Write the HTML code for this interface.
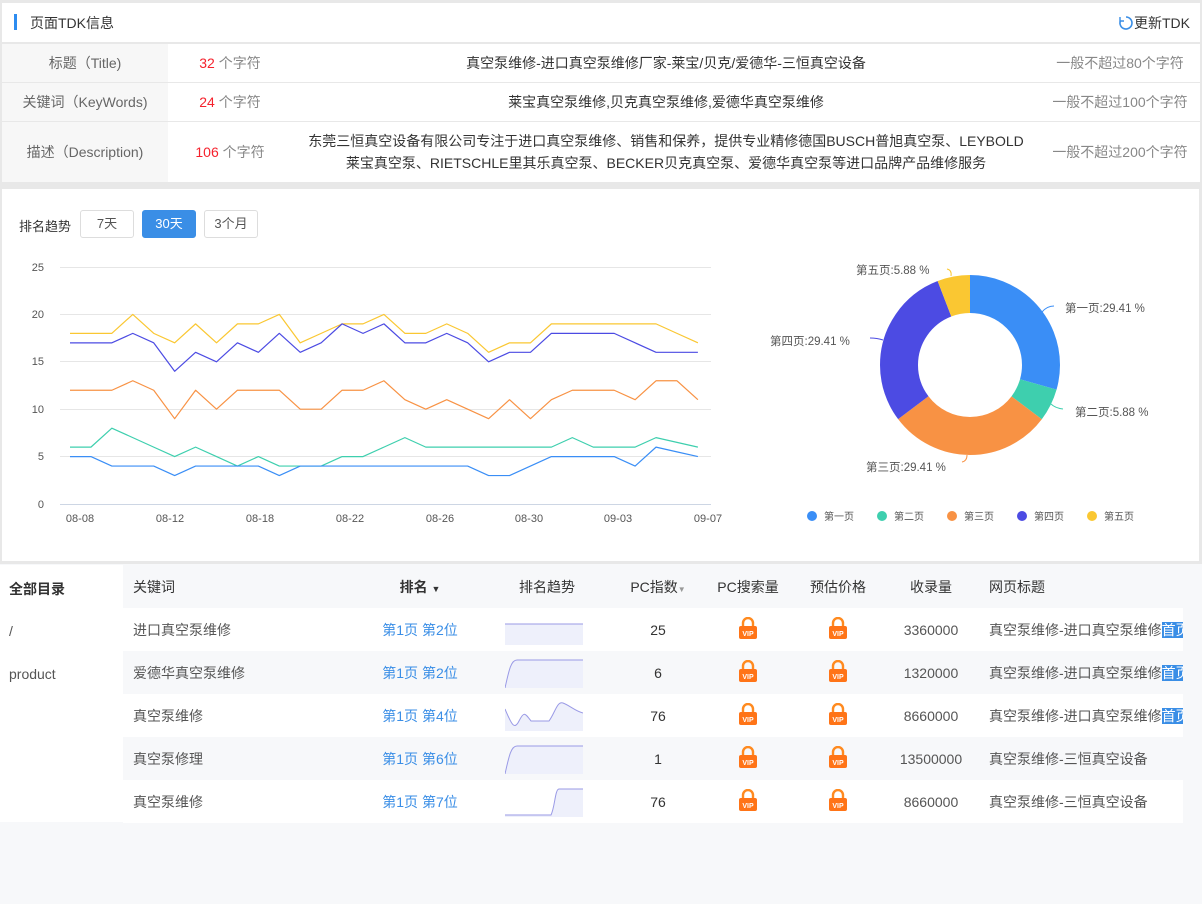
<!DOCTYPE html>
<html><head><meta charset="utf-8"><style>
*{margin:0;padding:0;box-sizing:border-box}
body{width:1202px;height:904px;background:#f7f8fa;font-family:"Liberation Sans","Noto Sans CJK SC",sans-serif;font-size:13px;color:#333;position:relative;overflow:hidden}
.abs{position:absolute}
.tdk{left:0;top:0;width:1202px;height:186px;background:#e8e8e8}
.hd{left:2px;top:3px;width:1198px;height:39px;background:#fff}
.row{left:2px;width:1198px;background:#fff;display:flex;align-items:center}
.row .l{width:166px;height:100%;background:#f7f7f7;display:flex;align-items:center;justify-content:center;color:#666;font-size:14px}
.row .c{width:124px;text-align:center;color:#888;font-size:14px}
.row .c b{color:#f5222d;font-weight:normal}
.row .m{flex:1;text-align:center;font-size:14px;line-height:22px;color:#333;white-space:nowrap}
.row .r{width:160px;text-align:center;color:#888;font-size:14px}
.card{left:0;top:186px;width:1202px;height:378px;background:#e8e8e8}
.cardin{left:2px;top:189px;width:1197px;height:372px;background:#fff}
.btn{top:210px;height:28px;border:1px solid #ddd;border-radius:3px;background:#fff;font-size:13px;color:#555;text-align:center;line-height:26px}
.side{left:0;top:565px;width:123px;height:257px;background:#fff}
.tr{height:43px;display:flex;align-items:center;font-size:14px;color:#555}
.tr>div{flex:none}
.lk{color:#3a8ee6}
.kw{width:10px}.k{width:202px}.rk{width:170px;text-align:center}.tc{width:108px;display:flex}.pi{width:90px;text-align:center;color:#333}.vp{width:90px;text-align:center}.sl{width:96px;text-align:center}.tt{width:204px;padding-left:10px;white-space:nowrap;overflow:hidden}
</style></head><body>
<div class="abs tdk"></div>
<div class="abs hd"><div class="abs" style="left:12px;top:11px;width:3px;height:16px;background:#2d8cf0"></div><div class="abs" style="left:28px;top:10px;font-size:14px;color:#333">页面TDK信息</div>
<div class="abs" style="right:10px;top:10px;font-size:14px;color:#333;display:flex;align-items:center"><svg width="16" height="16" viewBox="0 0 16 16"><path d="M8 2a6 6 0 1 1-5.6 3.8" fill="none" stroke="#3a8ee6" stroke-width="1.6"/><path d="M2 2v4h4" fill="none" stroke="#3a8ee6" stroke-width="1.4"/></svg>更新TDK</div></div>
<div class="abs row" style="top:44px;height:38px"><div class="l">标题（Title)</div><div class="c"><b>32</b> 个字符</div><div class="m">真空泵维修-进口真空泵维修厂家-莱宝/贝克/爱德华-三恒真空设备</div><div class="r">一般不超过80个字符</div></div>
<div class="abs row" style="top:83px;height:38px"><div class="l">关键词（KeyWords)</div><div class="c"><b>24</b> 个字符</div><div class="m">莱宝真空泵维修,贝克真空泵维修,爱德华真空泵维修</div><div class="r">一般不超过100个字符</div></div>
<div class="abs row" style="top:122px;height:60px"><div class="l">描述（Description)</div><div class="c"><b>106</b> 个字符</div><div class="m">东莞三恒真空设备有限公司专注于进口真空泵维修、销售和保养，提供专业精修德国BUSCH普旭真空泵、LEYBOLD<br>莱宝真空泵、RIETSCHLE里其乐真空泵、BECKER贝克真空泵、爱德华真空泵等进口品牌产品维修服务</div><div class="r">一般不超过200个字符</div></div>

<div class="abs card"></div><div class="abs cardin"></div>
<div class="abs" style="left:19px;top:216px;font-size:13px;color:#333">排名趋势</div>
<div class="abs btn" style="left:80px;width:54px">7天</div>
<div class="abs btn" style="left:142px;width:54px;background:#3a8ee6;border-color:#3a8ee6;color:#fff">30天</div>
<div class="abs btn" style="left:204px;width:54px">3个月</div>

<svg class="abs" style="left:0;top:0" width="1202" height="904">
<g stroke="#e6e6e6" stroke-width="1"><line x1="60" y1="267.5" x2="711" y2="267.5"/><line x1="60" y1="314.5" x2="711" y2="314.5"/><line x1="60" y1="361.5" x2="711" y2="361.5"/><line x1="60" y1="409.5" x2="711" y2="409.5"/><line x1="60" y1="456.5" x2="711" y2="456.5"/></g>
<line x1="60" y1="504.5" x2="711" y2="504.5" stroke="#cdd6e4"/>
<g font-size="11" fill="#555" font-family="Liberation Sans,sans-serif" text-anchor="end"><text x="44" y="271">25</text><text x="44" y="318">20</text><text x="44" y="365">15</text><text x="44" y="413">10</text><text x="44" y="460">5</text><text x="44" y="508">0</text></g>
<g font-size="11" fill="#555" font-family="Liberation Sans,sans-serif" text-anchor="middle"><text x="80" y="522">08-08</text><text x="170" y="522">08-12</text><text x="260" y="522">08-18</text><text x="350" y="522">08-22</text><text x="440" y="522">08-26</text><text x="529" y="522">08-30</text><text x="618" y="522">09-03</text><text x="708" y="522">09-07</text></g>
<g transform="translate(70,504) scale(20.93,-9.48)" fill="none" stroke-linejoin="round">
<polyline vector-effect="non-scaling-stroke" stroke="#fac732" stroke-width="1.2" points="0,18 1,18 2,18 3,20 4,18 5,17 6,19 7,17 8,19 9,19 10,20 11,17 12,18 13,19 14,19 15,20 16,18 17,18 18,19 19,18 20,16 21,17 22,17 23,19 24,19 25,19 26,19 27,19 28,19 29,18 30,17"/>
<polyline vector-effect="non-scaling-stroke" stroke="#4c4be3" stroke-width="1.2" points="0,17 1,17 2,17 3,18 4,17 5,14 6,16 7,15 8,17 9,16 10,18 11,16 12,17 13,19 14,18 15,19 16,17 17,17 18,18 19,17 20,15 21,16 22,16 23,18 24,18 25,18 26,18 27,17 28,16 29,16 30,16"/>
<polyline vector-effect="non-scaling-stroke" stroke="#f89244" stroke-width="1.2" points="0,12 1,12 2,12 3,13 4,12 5,9 6,12 7,10 8,12 9,12 10,12 11,10 12,10 13,12 14,12 15,13 16,11 17,10 18,11 19,10 20,9 21,11 22,9 23,11 24,12 25,12 26,12 27,11 28,13 29,13 30,11"/>
<polyline vector-effect="non-scaling-stroke" stroke="#3ecfae" stroke-width="1.2" points="0,6 1,6 2,8 3,7 4,6 5,5 6,6 7,5 8,4 9,5 10,4 11,4 12,4 13,5 14,5 15,6 16,7 17,6 18,6 19,6 20,6 21,6 22,6 23,6 24,7 25,6 26,6 27,6 28,7 29,6.5 30,6"/>
<polyline vector-effect="non-scaling-stroke" stroke="#3a8ef6" stroke-width="1.2" points="0,5 1,5 2,4 3,4 4,4 5,3 6,4 7,4 8,4 9,4 10,3 11,4 12,4 13,4 14,4 15,4 16,4 17,4 18,4 19,4 20,3 21,3 22,4 23,5 24,5 25,5 26,5 27,4 28,6 29,5.5 30,5"/>
</g>
<g transform="rotate(-90 970 365)" fill="none" stroke-width="38">
<circle cx="970" cy="365" r="71" stroke="#3a8ef6" stroke-dasharray="131.2 446.1" stroke-dashoffset="0"/>
<circle cx="970" cy="365" r="71" stroke="#3ecfae" stroke-dasharray="26.2 446.1" stroke-dashoffset="-131.2"/>
<circle cx="970" cy="365" r="71" stroke="#f89244" stroke-dasharray="131.2 446.1" stroke-dashoffset="-157.4"/>
<circle cx="970" cy="365" r="71" stroke="#4c4be3" stroke-dasharray="131.2 446.1" stroke-dashoffset="-288.6"/>
<circle cx="970" cy="365" r="71" stroke="#fac732" stroke-dasharray="26.3 446.1" stroke-dashoffset="-419.8"/>
</g>
<g fill="none" stroke-width="1"><path d="M1042 312 q5-6 12-6" stroke="#3a8ef6"/><path d="M1051 404 q4 4 12 5" stroke="#3ecfae"/><path d="M967 455 q0 6-5 7" stroke="#f89244"/><path d="M883 340 q-6-2-13-2" stroke="#4c4be3"/><path d="M951 276 q1-6-4-7" stroke="#fac732"/></g>
<g font-size="11.5" fill="#555" font-family="Liberation Sans,'Noto Sans CJK SC',sans-serif"><text x="1065" y="312">第一页:29.41 %</text><text x="1075" y="416">第二页:5.88 %</text><text x="866" y="471">第三页:29.41 %</text><text x="770" y="345">第四页:29.41 %</text><text x="856" y="274">第五页:5.88 %</text></g>
<g font-size="10" fill="#555" font-family="Liberation Sans,'Noto Sans CJK SC',sans-serif"><circle cx="812" cy="516" r="5" fill="#3a8ef6"/><text x="824" y="520">第一页</text><circle cx="882" cy="516" r="5" fill="#3ecfae"/><text x="894" y="520">第二页</text><circle cx="952" cy="516" r="5" fill="#f89244"/><text x="964" y="520">第三页</text><circle cx="1022" cy="516" r="5" fill="#4c4be3"/><text x="1034" y="520">第四页</text><circle cx="1092" cy="516" r="5" fill="#fac732"/><text x="1104" y="520">第五页</text></g>
</svg>

<svg width="0" height="0" style="position:absolute"><defs><g id="vip"><path d="M5 9V6a5 5 0 0 1 10 0v3" fill="none" stroke="#ff8a1f" stroke-width="2.4"/><rect x="1" y="9" width="18" height="13" rx="2" fill="#ff7417"/><text x="10" y="19" font-size="7" fill="#fff" font-weight="bold" text-anchor="middle" font-family="Liberation Sans,sans-serif">VIP</text></g></defs></svg>

<div class="abs side"><div class="abs" style="left:9px;top:14px;font-size:14px;font-weight:bold;color:#333">全部目录</div><div class="abs" style="left:9px;top:58px;font-size:14px;color:#555">/</div><div class="abs" style="left:9px;top:101px;font-size:14px;color:#555">product</div></div>

<div class="abs" style="left:123px;top:565px;width:1060px">
<div class="tr" style="background:#f7f8fa;color:#333"><div class="kw"></div><div class="k">关键词</div><div class="rk" style="font-weight:bold">排名 <span style="font-size:9px">▼</span></div><div class="tc" style="padding-left:14px">排名趋势</div><div class="pi">PC指数<span style="font-size:8px;color:#999">▼</span></div><div class="vp">PC搜索量</div><div class="vp">预估价格</div><div class="sl">收录量</div><div class="tt">网页标题</div></div>
<div class="tr" style="background:#fff"><div class="kw"></div><div class="k">进口真空泵维修</div><div class="lk rk">第1页 第2位</div><div class="tc"><svg width="78" height="30"><rect x="0" y="9" width="78" height="21" fill="#eef0fb"/><path d="M0 9H78" stroke="#9a9ae6"/></svg></div><div class="pi">25</div><div class="vp"><svg width="20" height="22"><use href="#vip"/></svg></div><div class="vp"><svg width="20" height="22"><use href="#vip"/></svg></div><div class="sl">3360000</div><div class="tt">真空泵维修-进口真空泵维修<span style="background:#3a8ee6;color:#fff">首页</span></div></div>
<div class="tr" style="background:#f7f8fa"><div class="kw"></div><div class="k">爱德华真空泵维修</div><div class="lk rk">第1页 第2位</div><div class="tc"><svg width="78" height="30"><path d="M0 30C4 12 6 2 12 2H78V30Z" fill="#eef0fb"/><path d="M0 30C4 12 6 2 12 2H78" fill="none" stroke="#9a9ae6"/></svg></div><div class="pi">6</div><div class="vp"><svg width="20" height="22"><use href="#vip"/></svg></div><div class="vp"><svg width="20" height="22"><use href="#vip"/></svg></div><div class="sl">1320000</div><div class="tt">真空泵维修-进口真空泵维修<span style="background:#3a8ee6;color:#fff">首页</span></div></div>
<div class="tr" style="background:#fff"><div class="kw"></div><div class="k">真空泵维修</div><div class="lk rk">第1页 第4位</div><div class="tc"><svg width="78" height="30"><path d="M0 8C6 22 9 30 14 20S20 12 26 20H44C50 12 52 0 58 2S70 10 78 12V30H0Z" fill="#eef0fb"/><path d="M0 8C6 22 9 30 14 20S20 12 26 20H44C50 12 52 0 58 2S70 10 78 12" fill="none" stroke="#9a9ae6"/></svg></div><div class="pi">76</div><div class="vp"><svg width="20" height="22"><use href="#vip"/></svg></div><div class="vp"><svg width="20" height="22"><use href="#vip"/></svg></div><div class="sl">8660000</div><div class="tt">真空泵维修-进口真空泵维修<span style="background:#3a8ee6;color:#fff">首页</span></div></div>
<div class="tr" style="background:#f7f8fa"><div class="kw"></div><div class="k">真空泵修理</div><div class="lk rk">第1页 第6位</div><div class="tc"><svg width="78" height="30"><path d="M0 30C4 12 6 2 12 2H78V30Z" fill="#eef0fb"/><path d="M0 30C4 12 6 2 12 2H78" fill="none" stroke="#9a9ae6"/></svg></div><div class="pi">1</div><div class="vp"><svg width="20" height="22"><use href="#vip"/></svg></div><div class="vp"><svg width="20" height="22"><use href="#vip"/></svg></div><div class="sl">13500000</div><div class="tt">真空泵维修-三恒真空设备</div></div>
<div class="tr" style="background:#fff"><div class="kw"></div><div class="k">真空泵维修</div><div class="lk rk">第1页 第7位</div><div class="tc"><svg width="78" height="30"><path d="M0 28H46C50 20 50 2 54 2H78V30H0Z" fill="#eef0fb"/><path d="M0 28H46C50 20 50 2 54 2H78" fill="none" stroke="#9a9ae6"/></svg></div><div class="pi">76</div><div class="vp"><svg width="20" height="22"><use href="#vip"/></svg></div><div class="vp"><svg width="20" height="22"><use href="#vip"/></svg></div><div class="sl">8660000</div><div class="tt">真空泵维修-三恒真空设备</div></div>
</div>
</body></html>
